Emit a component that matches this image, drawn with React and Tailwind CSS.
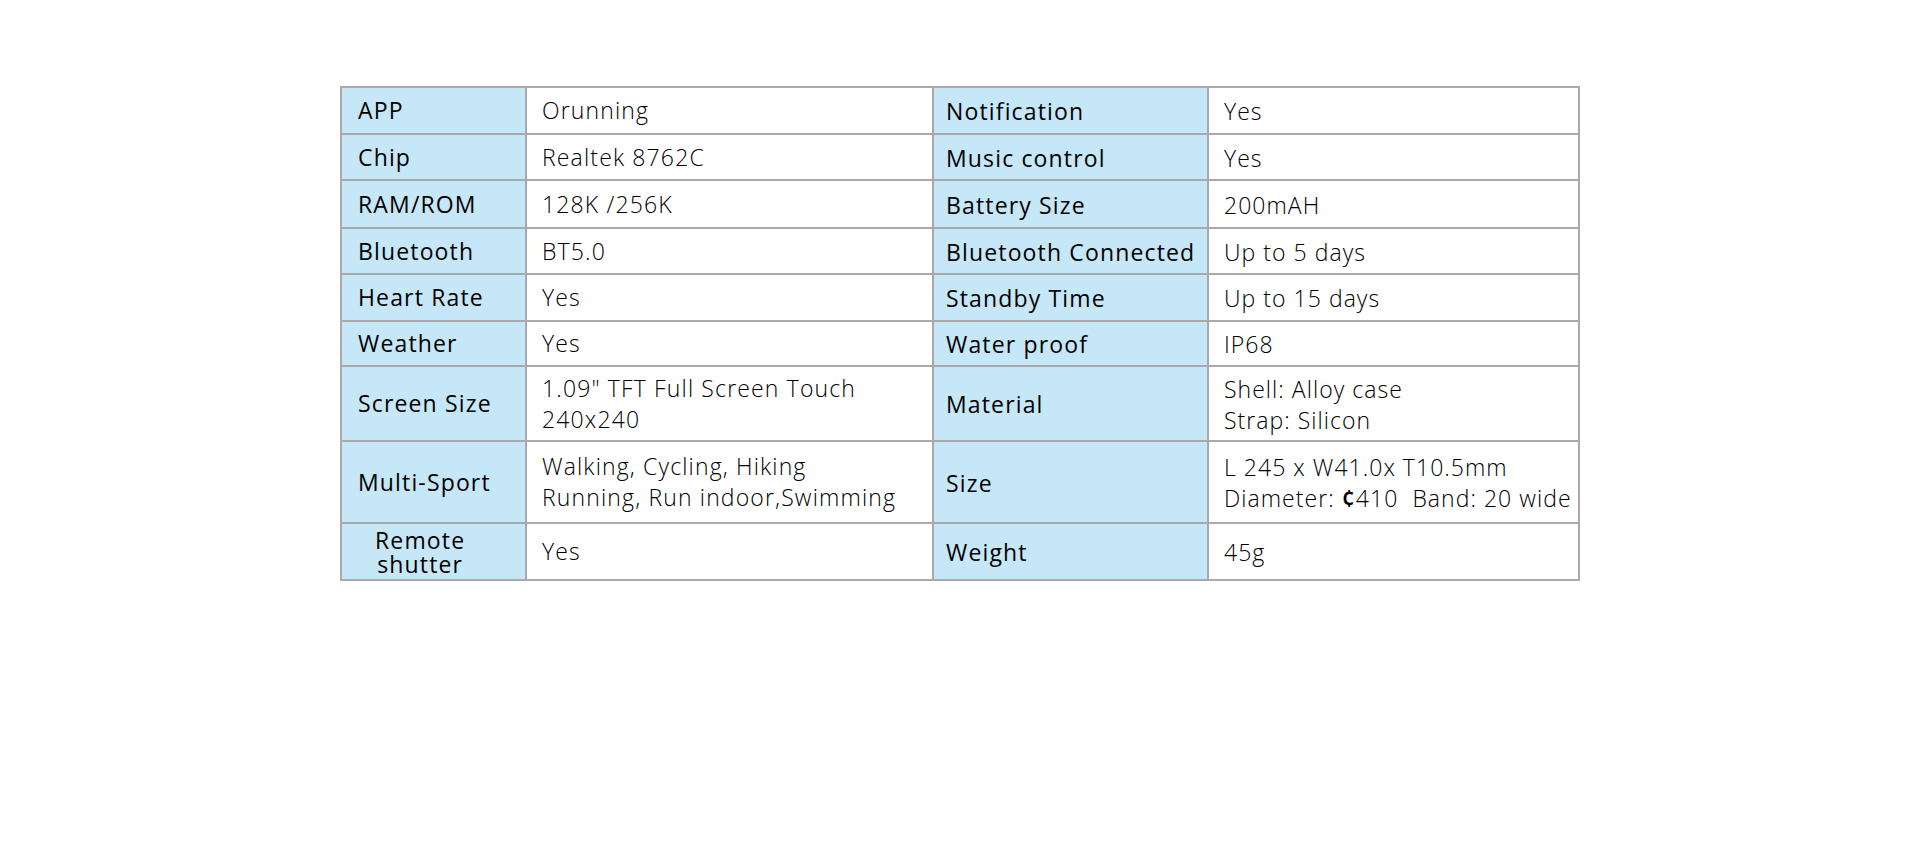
const rows = [
  { h: 'h-[45px]', a: 'APP', b: 'Orunning', c: 'Notification', d: 'Yes' },
  { h: 'h-[44px]', a: 'Chip', b: 'Realtek 8762C', c: 'Music control', d: 'Yes' },
  { h: 'h-[46px]', a: 'RAM/ROM', b: '128K /256K', c: 'Battery Size', d: '200mAH' },
  { h: 'h-[44px]', a: 'Bluetooth', b: 'BT5.0', c: 'Bluetooth Connected', d: 'Up to 5 days' },
  { h: 'h-[45px]', a: 'Heart Rate', b: 'Yes', c: 'Standby Time', d: 'Up to 15 days' },
  { h: 'h-[43px]', a: 'Weather', b: 'Yes', c: 'Water proof', d: 'IP68' },
  {
    h: 'h-[73px]',
    a: 'Screen Size',
    b: ['1.09" TFT Full Screen Touch', '240x240'],
    c: 'Material',
    d: ['Shell: Alloy case', 'Strap: Silicon'],
  },
  {
    h: 'h-[80px]',
    a: 'Multi-Sport',
    b: ['Walking, Cycling, Hiking', 'Running, Run indoor,Swimming'],
    c: 'Size',
    d: [
      'L 245 x W41.0x T10.5mm',
      <>
        Diameter: <span className="font-semibold">¢</span>410{'\u00a0\u00a0'}Band: 20 wide
      </>,
    ],
  },
  { h: 'h-[55px]', a: 'remote', b: 'Yes', c: 'Weight', d: '45g' },
];

function Value({ v }) {
  if (Array.isArray(v)) {
    return (
      <div className="leading-[31px]">
        {v.map((line, i) => (
          <div key={i}>{line}</div>
        ))}
      </div>
    );
  }
  return <span>{v}</span>;
}

export default function App() {
  return (
    <div className="min-h-screen bg-white pt-[86px]" style={{ fontFamily: '"Open Sans", "Noto Sans", sans-serif' }}>
      <div className="mx-auto w-[1240px] bg-[#a9a9a9] p-[2px] grid grid-cols-[183px_405px_273px_369px] gap-[2px] text-[23px] tracking-[0.05em]">
        {rows.map((r, i) => (
          <div key={i} className="contents">
            <div className={`${r.h} bg-[#c6e7f7] flex items-center pl-[16px] text-black`}>
              {r.a === 'remote' ? (
                <p className="pl-[17px] text-center leading-[24px]">
                  Remote
                  <br />
                  shutter
                </p>
              ) : (
                r.a
              )}
            </div>
            <div className={`${r.h} bg-white flex items-center pl-[15px] font-light text-black`}>
              <Value v={r.b} />
            </div>
            <div className={`${r.h} bg-[#c6e7f7] flex items-center pl-[12px] pt-[2px] whitespace-nowrap text-black`}>
              {r.c}
            </div>
            <div className={`${r.h} bg-white flex items-center pl-[15px] pt-[2px] font-light whitespace-nowrap text-black tracking-[0.045em]`}>
              <Value v={r.d} />
            </div>
          </div>
        ))}
      </div>
    </div>
  );
}
